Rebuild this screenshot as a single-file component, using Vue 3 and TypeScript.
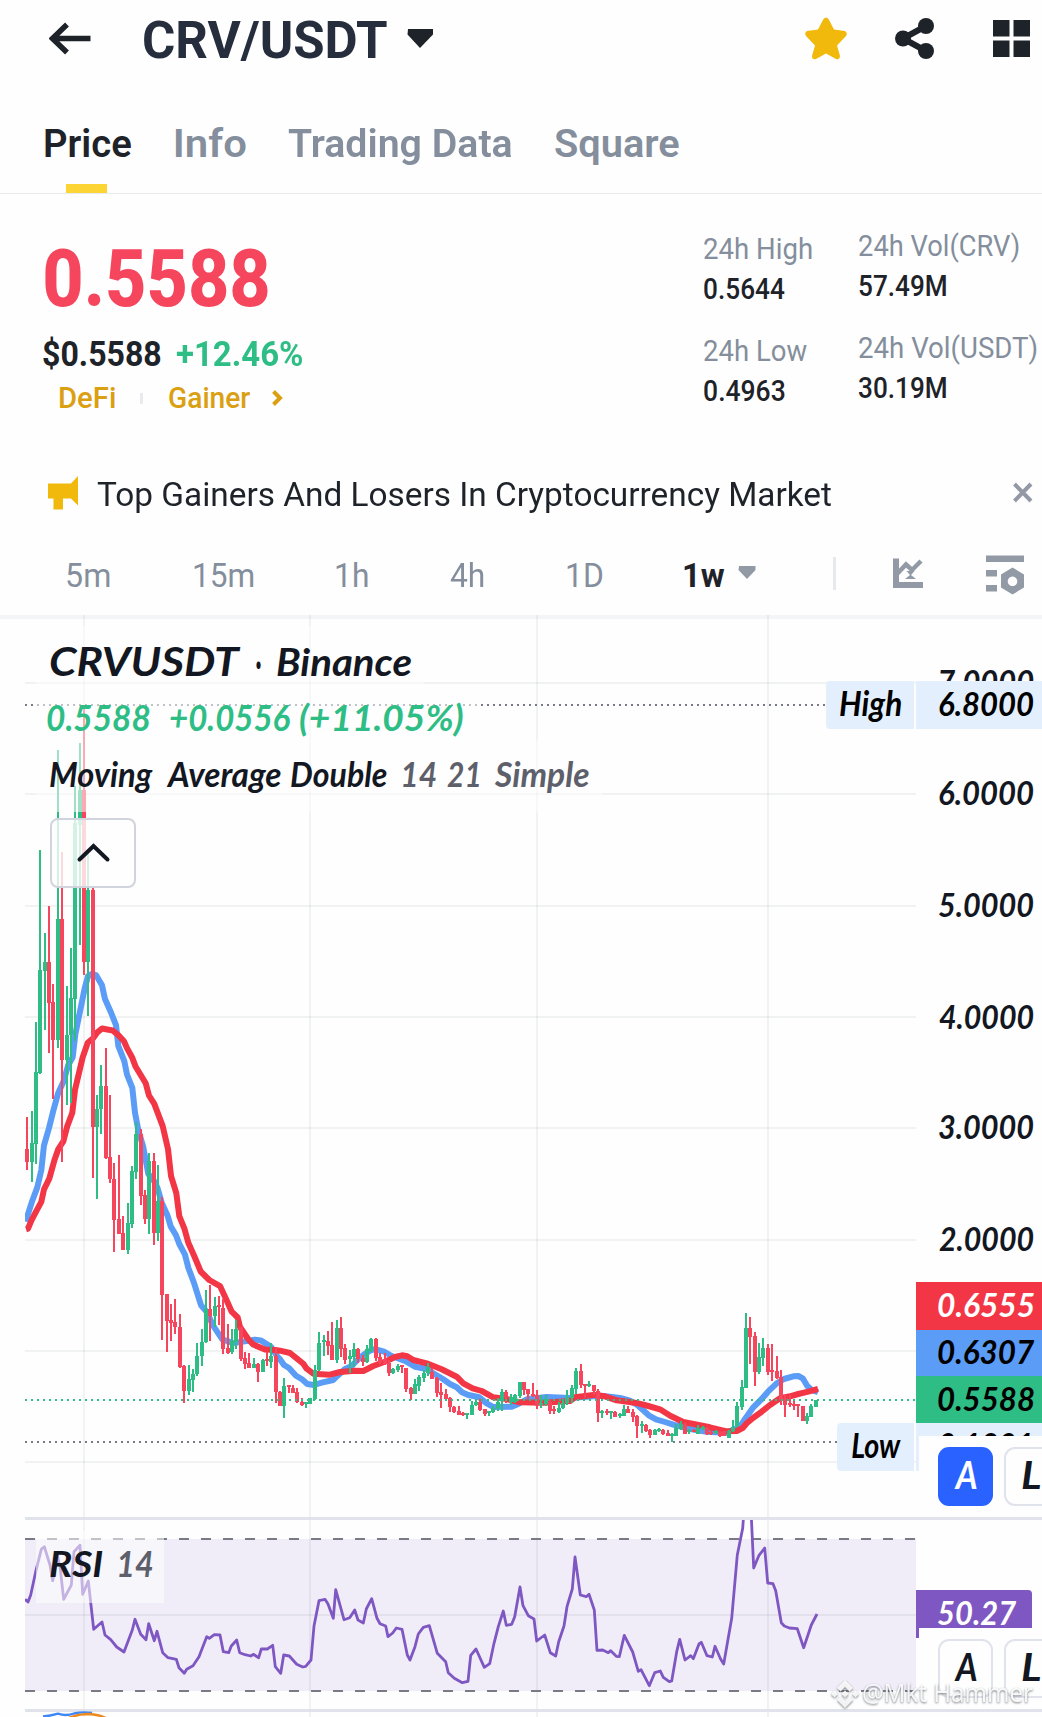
<script setup lang="ts">
type Fitted = { scale: number; shift: number }
type Label = { t: string; x: number; y: number; w: number; size: number; fill: string; weight?: number }
type Candle = { x: number; high: number; low: number; top: number; bottom: number; up: boolean }

const UI = 'Roboto, "Noto Sans", sans-serif'
const HAND = 'Lato, "Open Sans", sans-serif'
const ctx = document.createElement('canvas').getContext('2d')!

// Stretch factor and offset that make the ink of a string span `width` pixels.
function measure(text: string, width: number, font: string): Fitted {
  ctx.font = font
  const m = ctx.measureText(text)
  const ink = m.actualBoundingBoxLeft + m.actualBoundingBoxRight
  const scale = width / ink
  return { scale, shift: m.actualBoundingBoxLeft * scale }
}

function fit(text: string, width: number, size: number, weight: number) {
  const { scale, shift } = measure(text, width, `${weight} ${size}px ${UI}`)
  return {
    width: `${width}px`,
    fontSize: `${size}px`,
    fontWeight: weight,
    transform: `translateX(${shift}px) scaleX(${scale})`,
  }
}

function place(l: Label) {
  const { scale, shift } = measure(l.t, l.w, `italic ${l.weight ?? 700} ${l.size}px ${HAND}`)
  return `translate(${l.x + shift} ${l.y}) scale(${scale} 1)`
}

const tabs = [
  { t: 'Price', w: 86, ml: 45 },
  { t: 'Info', w: 71, ml: 44 },
  { t: 'Trading Data', w: 224, ml: 42 },
  { t: 'Square', w: 124, ml: 43 },
]

const stats = [
  [
    { t: '24h High', w: 108, v: '0.5644', vw: 81 },
    { t: '24h Low', w: 103, v: '0.4963', vw: 81 },
  ],
  [
    { t: '24h Vol(CRV)', w: 160, v: '57.49M', vw: 87 },
    { t: '24h Vol(USDT)', w: 178, v: '30.19M', vw: 87 },
  ],
]

const intervals = [
  { t: '5m', w: 43, ml: 67 },
  { t: '15m', w: 60, ml: 84 },
  { t: '1h', w: 32, ml: 82 },
  { t: '4h', w: 34, ml: 82 },
  { t: '1D', w: 35, ml: 83 },
  { t: '1w', w: 41, ml: 82 },
]

// x, high, low, body top, body bottom, direction — in thirds of a pixel.
const launch = `81 776 914 860 895 r|96 760 945 845 895 g|108 528 898 659 847 g|120 78 663 392 660 g|135 295 550 371 395 g|147 225 608 371 477 r|159 429 728 476 574 r|174 -183 597 259 574 g|186 84 893 259 627 r|201 435 744 562 627 g|213 335 740 465 562 g|225 -89 577 8 467 g|240 -202 326 -78 13 g|252 -292 404 -78 371 r|264 85 511 183 371 g|279 178 935 183 801 r|291 719 990 754 801 g|303 640 821 696 754 g|318 596 886 696 883 r|330 719 948 881 937 r|342 896 1128 937 1045 r|357 875 1082 1044 1081 r|369 1035 1125 1080 1123 r|384 1001 1133 1053 1123 g|396 904 1065 917 1055 g|408 790 937 821 919 g|423 808 1005 821 982 r|435 967 1055 980 1042 r|447 870 1081 892 1042 g|462 870 1110 892 1078 r|474 902 1099 996 1078 g|486 985 1358 996 1241 r|501 1240 1389 1240 1308 r|513 1265 1361 1307 1314 r|525 1252 1343 1313 1326 r|540 1291 1431 1325 1429 r|552 1425 1523 1427 1492 r|567 1424 1502 1462 1492 g|579 1435 1494 1448 1463 g|591 1367 1452 1401 1448 g|606 1331 1426 1365 1402 g|618 1228 1367 1278 1365 g|630 1215 1361 1278 1296 r|645 1247 1324 1270 1296 g|657 1244 1319 1267 1273 r|669 1252 1396 1275 1382 r|684 1317 1396 1380 1394 r|696 1329 1396 1361 1389 g|708 1307 1382 1331 1363 g|723 1325 1415 1325 1409 r|735 1390 1435 1407 1421 r|747 1393 1432 1419 1432 r|762 1405 1432 1422 1432 g|774 1419 1469 1422 1442 r|789 1409 1442 1411 1442 g|801 1391 1427 1408 1414 r|813 1367 1432 1402 1417 g|828 1379 1523 1402 1496 r|840 1492 1531 1494 1531 r`
const middle = `12 294 413 318 378 g|27 315 340 315 320 r|39 315 340 323 338 r|51 324 369 337 366 r|66 354 377 366 374 r|78 366 384 366 371 g|90 354 372 354 372 g|105 255 360 270 357 g|117 156 272 189 270 g|132 165 228 180 186 g|144 153 225 182 198 r|156 126 240 195 240 r|171 120 249 144 240 g|183 111 231 144 207 r|195 192 252 204 240 r|210 210 279 228 237 g|222 189 261 207 231 g|234 204 249 207 237 r|249 225 258 234 246 r|261 195 249 207 246 g|273 174 216 177 213 g|288 174 243 177 234 r|300 219 252 231 246 r|315 219 254 237 252 r|327 240 288 249 279 r|339 264 282 267 279 g|354 252 276 258 270 g|366 255 279 255 259 r|378 264 336 264 327 r|393 321 360 324 342 r|405 297 342 312 342 g|417 285 333 291 318 g|432 270 306 279 294 g|444 249 288 261 279 g|456 264 297 276 297 r|471 291 351 294 339 r|483 309 384 336 346 r|498 327 357 342 357 r|510 351 396 354 381 r|522 378 399 381 396 r|537 378 405 393 405 r|549 396 408 399 405 r|561 399 417 399 405 g|576 363 405 375 405 g|588 357 378 366 375 g|600 357 393 366 390 r|615 387 408 387 402 r|627 393 408 393 399 g|639 378 399 384 396 g|654 354 393 366 384 g|666 327 393 336 363 g|678 330 369 336 354 r|693 342 375 352 366 g|705 342 369 345 366 g|720 306 354 306 347 g|732 306 345 306 330 r|744 327 357 327 342 r|759 309 351 342 348 r|771 330 387 345 378 r|783 345 384 369 375 g|798 345 378 357 372 g|810 357 402 366 393 r|822 378 402 387 393 r|837 366 399 384 396 g|849 357 387 369 384 g|861 330 375 351 369 g|876 315 369 324 354 g|888 264 342 273 327 g|903 252 324 273 315 r|915 312 354 312 318 r|927 303 321 312 318 g|942 315 345 315 333 r|954 327 426 333 399 r`
const recent = `66 390 414 393 399 g|81 387 405 393 399 r|93 393 417 393 399 g|105 393 411 396 411 r|120 399 414 402 408 g|132 375 408 387 408 g|144 378 399 387 399 r|159 387 426 396 411 r|171 405 474 408 438 r|186 423 459 432 438 g|198 432 456 435 453 r|210 447 474 450 465 r|225 447 465 450 465 g|237 444 456 447 453 g|249 447 465 450 462 r|264 450 468 459 468 r|276 459 486 462 468 g|288 432 468 444 468 g|303 423 450 432 447 g|315 429 462 435 462 r|327 447 462 450 456 g|342 447 456 450 456 r|354 435 462 444 462 g|369 438 450 441 447 g|381 441 465 444 462 r|393 453 465 456 462 r|408 450 462 453 459 g|420 453 471 456 468 r|432 453 468 453 468 r|447 450 474 453 474 g|459 420 456 441 453 g|471 366 441 378 438 g|486 300 390 321 381 g|498 99 324 144 324 g|510 111 252 144 171 r|525 156 318 168 276 r|537 189 282 231 276 g|549 174 258 204 234 g|564 192 285 204 276 r|576 192 303 270 276 r|591 228 297 273 294 r|603 270 375 291 360 r|615 345 411 357 375 r|630 345 381 369 375 r|642 357 390 372 378 r|654 372 411 372 378 r|669 378 423 378 423 r|681 399 432 408 423 g|693 372 411 378 411 g|708 360 381 360 381 g`

const TALL = 2.6133

function candles(src: string, x0: number, y0: number, ky: number): Candle[] {
  return src.split('|').map((row) => {
    const p = row.split(' ')
    const y = (i: number) => Math.round(y0 + Number(p[i]) / ky)
    return { x: Math.round(x0 + Number(p[0]) / 3), high: y(1), low: y(2), top: y(3), bottom: y(4), up: p[5] === 'g' }
  })
}

const bars = [
  ...candles(launch, 0, 820, TALL),
  ...candles(middle, 280, 1280, 3),
  ...candles(recent, 580, 1280, 3),
]

function points(src: string, x0: number, y0: number, ky: number) {
  return src
    .split(' ')
    .map((pair) => {
      const [x, y] = pair.split(',').map(Number)
      return `${(x0 + x / 3).toFixed(1)},${(y0 + y / ky).toFixed(1)}`
    })
    .join(' ')
}

const fast = [
  points('78,1050 84,1030 97,995 112,960 124,915 132,850 147,805 160,760 174,715 190,685 205,640 218,620 226,560 240,500 254,440 264,408 276,402 288,405 306,432 315,468 333,503 348,536 355,590 373,630 381,665 397,700 405,765 415,810 430,855 445,925 460,940 472,960 485,1000 503,1035 512,1062 528,1085 538,1108 555,1136 565,1170 583,1212 603,1268 620,1285 640,1322 667,1357 700,1367 745,1361 765,1358 782,1360 812,1376 830,1400', 0, 820, TALL),
  points('0,238 12,255 27,264 48,287 66,298 82,312 102,315 125,308 160,300 172,288 195,267 215,258 232,240 250,225 268,213 285,207 312,215 335,228 375,243 405,260 440,267 460,280 490,298 510,312 530,322 546,337 565,345 598,352 620,370 640,381 695,380 715,372 740,358 800,351 870,354 940,349', 280, 1280, 3),
  points('60,347 90,350 120,354 150,362 172,375 190,391 206,406 228,418 255,426 280,434 330,447 380,455 440,458 480,440 495,417 520,382 545,357 564,335 590,310 612,297 640,289 655,288 668,295 682,318 695,330 714,337', 580, 1280, 3),
].join(' ')

const slow = [
  points('78,1070 84,1068 95,1045 110,1020 124,998 132,965 148,937 163,890 175,860 190,840 202,800 217,765 225,705 248,620 263,582 280,570 292,555 306,545 338,550 355,562 372,578 381,596 396,620 407,645 437,688 447,720 463,742 488,800 504,860 513,930 529,975 538,1035 553,1067 565,1105 582,1138 602,1180 628,1202 660,1218 677,1250 695,1285 713,1300 720,1325 745,1357 760,1371 795,1384 826,1385', 0, 820, TALL),
  points('0,212 30,219 50,235 70,251 80,266 100,281 150,284 180,276 225,272 250,273 280,258 320,243 345,231 366,226 382,229 400,240 440,250 485,268 530,290 550,310 578,325 605,333 640,352 680,357 720,367 790,368 870,363 885,352 940,345', 280, 1280, 3),
  points('45,345 75,349 110,361 175,370 205,378 240,388 272,408 310,426 390,442 440,454 470,453 488,444 500,430 520,413 545,395 570,375 600,355 630,349 655,342 685,335 714,327', 580, 1280, 3),
].join(' ')

const rsi = [
  points('75,298 84,306 92,285 107,215 124,148 133,140 150,195 158,242 172,165 180,200 191,298 214,255 222,155 240,136 248,283 265,243 281,388 306,366 315,405 332,419 350,441 372,456 397,390 405,358 422,403 438,419 446,371 463,422 471,394 488,458 504,473 529,478 537,503 553,520 560,508 579,497 597,470 620,410 628,415 643,404 660,405 670,455 686,458 694,438 710,420 719,458 735,464 752,468 760,463 776,473 784,447 802,447 818,436 826,500 842,520 851,465 868,468 890,493 908,501 917,499 933,480 942,378 957,302 975,298 984,312 1000,355 1007,269 1032,359 1049,353 1064,330 1074,360 1090,369 1099,327 1115,296 1131,355 1140,371 1157,378 1164,410 1178,399 1189,384 1206,388 1222,465', 0, 1500, 3),
  points('0,480 15,440 25,402 40,382 58,377 82,460 107,485 115,518 133,535 157,548 174,544 182,466 198,447 223,502 239,491 252,430 265,380 280,333 289,376 305,373 314,350 330,261 339,317 355,347 372,357 380,423 404,405 421,458 437,468 446,425 462,378 471,320 487,267 495,171 511,285 529,290 537,283 553,330 561,451 578,450 595,458 602,452 619,469 628,470 643,406 668,456 685,514 693,509 718,557 734,518 751,513 760,532 778,545 785,543 800,455 809,418 825,480 842,467 850,476 867,432 874,427 891,467 907,471 915,439 932,478 941,492 965,355 982,165 998,85 1002,30 1023,30 1031,204 1047,166 1064,144 1073,249 1089,251 1097,272 1114,368 1123,378 1138,384 1162,386 1181,443 1204,375 1221,342', 410, 1500, 3),
].join(' ')

const vGrid = [84, 310, 537, 768]
const hGrid = [683, 794, 906, 1017, 1128, 1240, 1351, 1462]

const INK = '#131722'
const scaleLabels: Label[] = [
  { t: '7.0000', x: 939, y: 694, w: 95, size: 33, fill: INK },
  { t: '6.0000', x: 939, y: 805, w: 95, size: 33, fill: INK },
  { t: '5.0000', x: 939, y: 917, w: 95, size: 33, fill: INK },
  { t: '4.0000', x: 939, y: 1029, w: 95, size: 33, fill: INK },
  { t: '3.0000', x: 939, y: 1139, w: 95, size: 33, fill: INK },
  { t: '2.0000', x: 939, y: 1251, w: 95, size: 33, fill: INK },
]
const lowLabel: Label = { t: '0.1801', x: 939, y: 1457, w: 92, size: 33, fill: '#000' }

const tagLabels: Label[] = [
  { t: 'High', x: 840, y: 716, w: 61, size: 34, fill: '#000' },
  { t: '6.8000', x: 939, y: 716, w: 95, size: 33, fill: '#000' },
  { t: '0.6555', x: 938, y: 1317, w: 96, size: 33, fill: '#fff' },
  { t: '0.6307', x: 938, y: 1364, w: 96, size: 33, fill: '#000' },
  { t: '0.5588', x: 938, y: 1411, w: 96, size: 33, fill: '#000' },
  { t: 'Low', x: 852, y: 1458, w: 49, size: 34, fill: '#000' },
  { t: '50.27', x: 938, y: 1625, w: 78, size: 33, fill: '#fff' },
]

const GREEN = '#2ebd85'
const MUTED = '#5d606b'
const legend: Label[] = [
  { t: 'CRVUSDT', x: 50, y: 676, w: 191, size: 41, fill: INK },
  { t: '·', x: 256, y: 677, w: 5, size: 40, fill: INK },
  { t: 'Binance', x: 277, y: 676, w: 134, size: 39, fill: INK },
  { t: '0.5588', x: 47, y: 731, w: 103, size: 36, fill: GREEN },
  { t: '+0.0556', x: 170, y: 731, w: 120, size: 36, fill: GREEN },
  { t: '(+11.05%)', x: 300, y: 731, w: 163, size: 36, fill: GREEN },
  { t: 'Moving', x: 50, y: 787, w: 103, size: 34, fill: INK },
  { t: 'Average', x: 166, y: 787, w: 115, size: 34, fill: INK },
  { t: 'Double', x: 291, y: 787, w: 96, size: 34, fill: INK },
  { t: '14', x: 403, y: 787, w: 33, size: 35, fill: MUTED },
  { t: '21', x: 447, y: 787, w: 32, size: 35, fill: MUTED },
  { t: 'Simple', x: 494, y: 787, w: 95, size: 34, fill: MUTED },
  { t: 'RSI', x: 50, y: 1577, w: 53, size: 36, fill: INK },
  { t: '14', x: 119, y: 1577, w: 34, size: 36, fill: MUTED },
]

const modeLabels: Label[] = [
  { t: 'A', x: 954, y: 1489, w: 23, size: 38, fill: '#fff' },
  { t: 'L', x: 1022, y: 1489, w: 18, size: 38, fill: INK },
  { t: 'A', x: 954, y: 1681, w: 23, size: 38, fill: INK },
  { t: 'L', x: 1022, y: 1681, w: 18, size: 38, fill: INK },
]
</script>

<template>
  <main class="screen">
    <header class="top">
      <svg class="back" width="42" height="81" viewBox="49 0 42 81"><path d="M67 24.5 52.5 38.5 67 52.5M53 38.5H90.5" /></svg>
      <h1 class="txt" :style="fit('CRV/USDT', 243, 51, 700)">CRV/USDT</h1>
      <svg class="caret" width="26" height="81" viewBox="407 0 26 81"><path d="M408 29H433V34.5L420 48 407.500 34.500Z" /></svg>
      <svg class="star" width="42" height="81" viewBox="805 0 42 81">
        <path d="M823.500 19Q826 16 828.500 19L834 29.500 845 31Q848 33 846 36L837 45.500 840 56Q839.500 60 836 59L826 53.500 816 59Q812 60 812 56L815 45.500 806 36Q804 33 807 31L818 29.500Z" />
      </svg>
      <svg class="share" width="40" height="81" viewBox="895 0 40 81">
        <path d="M903 38.500 926 26M903 38.500 926 51" />
        <circle cx="903" cy="38.500" r="8" /><circle cx="926" cy="26" r="8" /><circle cx="926" cy="51" r="8" />
      </svg>
      <svg class="apps" width="38" height="81" viewBox="993 0 38 81">
        <path d="M993 20h16.500v16.500H993zM1013.500 20h16.500v16.500h-16.500zM993 40.500h16.500V57H993zM1013.500 40.500h16.500V57h-16.500z" />
      </svg>
    </header>

    <nav class="tabs">
      <div v-for="(tab, i) in tabs" :key="tab.t" class="tab" :class="{ active: i === 0 }" :style="{ marginLeft: tab.ml + 'px' }">
        <span class="txt" :style="fit(tab.t, tab.w, 38.5, 600)">{{ tab.t }}</span>
      </div>
    </nav>

    <section class="ticker">
      <div class="quote">
        <div class="price txt" :style="fit('0.5588', 223, 80, 800)">0.5588</div>
        <div class="change">
          <span class="txt" :style="fit('$0.5588', 118, 34.5, 700)">$0.5588</span>
          <span class="txt gain" :style="fit('+12.46%', 126, 34.5, 700)">+12.46%</span>
        </div>
        <div class="tags">
          <span class="txt" :style="fit('DeFi', 55, 29, 500)">DeFi</span>
          <i class="bar"></i>
          <span class="txt" :style="fit('Gainer', 81, 29, 500)">Gainer</span>
          <svg width="11" height="16" viewBox="0 0 11 16"><path d="M1.500 1.500 8 8 1.500 14.500" /></svg>
        </div>
      </div>
      <div v-for="(col, c) in stats" :key="c" class="stats" :class="{ wide: c === 1 }">
        <div v-for="s in col" :key="s.t" class="stat">
          <span class="txt label" :style="fit(s.t, s.w, 29.5, 400)">{{ s.t }}</span>
          <span class="txt" :style="fit(s.v, s.vw, 29.5, 500)">{{ s.v }}</span>
        </div>
      </div>
    </section>

    <section class="notice">
      <svg class="horn" width="31" height="69" viewBox="48 460 31 69"><path d="M48 483.500H71L78 476V505.500L71 498.500H63V509.500H53.500V498.500H48Z" /></svg>
      <span class="txt" :style="fit('Top Gainers And Losers In Cryptocurrency Market', 734, 33.5, 450)">Top Gainers And Losers In Cryptocurrency Market</span>
      <svg class="close" width="20" height="69" viewBox="1013 460 20 69"><path d="M1014.500 484 1031 501M1031 484 1014.500 501" /></svg>
    </section>

    <section class="intervals">
      <div v-for="(it, i) in intervals" :key="it.t" class="interval" :class="{ on: i === 5 }" :style="{ marginLeft: it.ml + 'px' }">
        <span class="txt" :style="fit(it.t, it.w, 33.5, i === 5 ? 700 : 450)">{{ it.t }}</span>
      </div>
      <svg class="tools" width="300" height="79" viewBox="738 536 300 79">
        <path d="M739 566H755.500V570L747 579 738.500 570Z" />
        <path class="rule" d="M833 557h3v33h-3z" />
        <path d="M893 558.500h6V582h24v6H893z" />
        <path class="line" d="M897 574 906 564.500 912 570 921 561" />
        <path d="M906.500 571H914.500L911 575 916 579H905L910 575Z" />
        <path d="M986 555.500h38v6.500h-38zM986 570h11v6.500h-11zM986 585h11v6.500h-11z" />
        <path fill-rule="evenodd" d="M1012.500 567.500 1024 574.500V587.500L1012.500 594.500 1001 587.500V574.500ZM1012.500 576.500a4.800 4.800 0 1 0 .01 0Z" />
      </svg>
    </section>

    <svg class="chart" width="1042" height="1102" viewBox="0 615 1042 1102">
      <defs>
        <clipPath id="pane"><rect x="25" y="615" width="891" height="902" /></clipPath>
        <clipPath id="rsiPane"><rect x="25" y="1520" width="891" height="189" /></clipPath>
      </defs>
      <rect class="edge" x="0" y="615" width="1042" height="4" />

      <rect class="band" x="25" y="1539" width="891" height="152" />
      <g class="grid">
        <rect v-for="x in vGrid" :key="'v' + x" :x="x - 1" y="615" width="2" height="1102" />
        <rect v-for="y in hGrid" :key="'h' + y" x="25" :y="y - 1" width="891" height="2" />
        <rect x="25" y="1614" width="891" height="2" />
      </g>

      <path class="dots" d="M25 705H826M25 1442H837" />

      <g clip-path="url(#pane)">
        <polyline class="ma fast" :points="fast" />
        <polyline class="ma slow" :points="slow" />
        <g v-for="(b, i) in bars" :key="i" :class="b.up ? 'up' : 'down'">
          <rect :x="b.x - 1" :y="b.high" width="2" :height="b.low - b.high" />
          <rect :x="b.x - 2" :y="b.top" width="4" :height="Math.max(2, b.bottom - b.top)" />
        </g>
      </g>
      <path class="dots last" d="M25 1400H916" />

      <path class="dash" d="M25 1539H916M25 1691H916" />
      <polyline class="rsi" clip-path="url(#rsiPane)" :points="rsi" />
      <path class="divider" d="M25 1517H1042V1520H25ZM25 1709H1042V1712H25Z" />
      <path class="macd" d="M43 1716.500Q50 1716 58 1713.700 66 1716.500 74 1713.500 83 1711.500 92 1713" />
      <path class="signal" d="M68 1718Q77 1714.500 87 1714 97 1714 106 1718" />

      <g class="veil">
        <rect x="36" y="626" width="388" height="60" />
        <rect x="36" y="686" width="444" height="54" />
        <rect x="36" y="740" width="566" height="72" />
        <rect x="36" y="1531" width="128" height="72" />
      </g>
      <rect class="toggle" x="51" y="819" width="84" height="68" rx="7" />
      <path class="chevron" d="M79.500 859.500 93.500 846 107.500 859.500" />

      <g class="hand">
        <text v-for="(l, i) in scaleLabels" :key="'s' + i" :transform="place(l)" :font-size="l.size" :fill="l.fill">{{ l.t }}</text>
      </g>

      <path class="pale" d="M830 681H914V729H830Q826 729 826 725V685Q826 681 830 681ZM916 681H1042V729H916Z" />
      <path class="pale" d="M841 1423H914V1471H841Q837 1471 837 1467V1427Q837 1423 841 1423ZM916 1423H1042V1471H916Z" />
      <g class="hand">
        <text :transform="place(lowLabel)" :font-size="lowLabel.size" :fill="lowLabel.fill">{{ lowLabel.t }}</text>
      </g>
      <rect x="916" y="1282" width="126" height="48" fill="#f23645" />
      <rect x="916" y="1330" width="126" height="46" fill="#5b9cf6" />
      <rect x="916" y="1376" width="126" height="47" fill="#2ebd85" />
      <path fill="#7e57c2" d="M916 1590H1028Q1032 1590 1032 1594V1638H916Z" />
      <path fill="#fefefe" d="M919 1436H1042V1517H919ZM919 1628H1042V1709H919Z" />

      <rect x="938" y="1447" width="55" height="59" rx="11" fill="#2962ff" />
      <rect class="mode" x="1005" y="1448" width="55" height="57" rx="10" />
      <rect class="mode" x="939" y="1640" width="53" height="57" rx="10" />
      <rect class="mode" x="1005" y="1640" width="55" height="57" rx="10" />

      <g class="hand">
        <text v-for="(l, i) in [...tagLabels, ...legend, ...modeLabels]" :key="'t' + i" :transform="place(l)" :font-size="l.size" :fill="l.fill">{{ l.t }}</text>
      </g>

      <g class="mark">
        <path d="M837 1688 845 1680 853 1688 849.500 1691.500 845 1687 840.500 1691.500ZM831 1694 834.500 1690.500 838 1694 834.500 1697.500ZM852 1694 855.500 1690.500 859 1694 855.500 1697.500ZM841.500 1694 845 1690.500 848.500 1694 845 1697.500ZM837 1700 840.500 1696.500 845 1701 849.500 1696.500 853 1700 845 1708Z" />
        <text x="862" y="1702" textLength="171" lengthAdjust="spacingAndGlyphs">@Mkt Hammer</text>
      </g>
    </svg>
  </main>
</template>

<style>
body {
  margin: 0;
  background: #fefefe;
}
</style>

<style scoped>
.screen {
  width: 1042px;
  height: 1717px;
  overflow: hidden;
  background: #fefefe;
  color: #1e2329;
  font-family: Roboto, "Noto Sans", sans-serif;
}
svg {
  display: block;
  flex: none;
}
.txt {
  display: block;
  flex: none;
  margin: 0;
  white-space: nowrap;
  transform-origin: 0 50%;
}
.top {
  display: flex;
  height: 81px;
  padding-left: 49px;
}
.top h1 {
  margin-left: 53px;
  line-height: 81px;
  color: #262d3d;
}
.back path {
  fill: none;
  stroke: #1e2329;
  stroke-width: 5.5;
}
.caret {
  margin-left: 20px;
  fill: #1e2329;
}
.star {
  margin-left: 372px;
  fill: #f0b90b;
}
.share {
  margin-left: 48px;
  fill: #1e2329;
}
.share path {
  stroke: #1e2329;
  stroke-width: 6;
}
.apps {
  margin-left: 58px;
  fill: #1e2329;
}
.tabs {
  display: flex;
  height: 112px;
  border-bottom: 1px solid #e9eaec;
}
.tab {
  position: relative;
  padding-top: 33px;
  height: 79px;
  line-height: 60px;
  color: #848e9c;
}
.tab.active {
  color: #1e2329;
}
.tab.active::after {
  content: "";
  position: absolute;
  left: 21px;
  bottom: 0;
  width: 41px;
  height: 9px;
  background: #fcd535;
}
.ticker {
  display: flex;
  height: 266px;
}
.quote {
  width: 660px;
  padding: 44px 0 0 45px;
  box-sizing: border-box;
  margin-right: 44px;
}
.price {
  line-height: 82px;
  color: #f6465d;
}
.change {
  display: flex;
  gap: 15px;
  margin: 12px 0 0 -2px;
  line-height: 44px;
}
.gain {
  color: #2ebd85;
}
.tags {
  display: flex;
  align-items: center;
  padding-left: 15px;
  line-height: 44px;
  color: #dba012;
}
.bar {
  width: 3px;
  height: 11px;
  margin: 0 26px 0 25px;
  background: #e9eaee;
}
.tags svg {
  margin-left: 22px;
}
.tags path {
  fill: none;
  stroke: #dba012;
  stroke-width: 4;
}
.stats {
  display: flex;
  flex-direction: column;
  gap: 22px;
  width: 155px;
  padding-top: 35px;
  line-height: 40px;
}
.stats.wide {
  padding-top: 32px;
}
.label {
  color: #848e9c;
}
.notice {
  display: flex;
  height: 69px;
  padding-left: 48px;
  line-height: 69px;
}
.horn {
  margin-right: 18px;
  fill: #f0b90b;
}
.close {
  margin-left: 182px;
}
.close path {
  fill: none;
  stroke: #9299a5;
  stroke-width: 4;
}
.intervals {
  display: flex;
  height: 79px;
  padding-top: 7px;
  line-height: 79px;
}
.interval {
  color: #848e9c;
}
.interval.on {
  color: #1e2329;
}
.tools {
  margin-left: 13px;
  fill: #929aa6;
}
.tools .rule {
  fill: #e8e9ed;
}
.tools .line {
  fill: none;
  stroke: #929aa6;
  stroke-width: 4.5;
}
.edge {
  fill: #f4f5f6;
}
.band {
  fill: #f0edf8;
}
.grid rect {
  fill: #2a2e39;
  fill-opacity: 0.06;
}
.dots {
  fill: none;
  stroke: #787b86;
  stroke-width: 2;
  stroke-dasharray: 2 4;
}
.dots.last {
  stroke: #2ebd85;
}
.ma {
  fill: none;
  stroke-width: 6;
  stroke-linejoin: round;
}
.fast {
  stroke: #5b9cf6;
}
.slow {
  stroke: #f23645;
}
.up {
  fill: #2ebd85;
}
.down {
  fill: #f6465d;
}
.dash {
  fill: none;
  stroke: #787b86;
  stroke-width: 2;
  stroke-dasharray: 10 12;
}
.rsi {
  fill: none;
  stroke: #7e57c2;
  stroke-width: 2.8;
  stroke-linejoin: round;
}
.divider {
  fill: #e0e3eb;
}
.macd,
.signal {
  fill: none;
  stroke: #3f86f7;
  stroke-width: 2.4;
}
.signal {
  stroke: #ee8a1d;
}
.veil rect {
  fill: #fefefe;
  fill-opacity: 0.55;
}
.toggle {
  fill: #fefefe;
  fill-opacity: 0.8;
  stroke: #d1d4dc;
  stroke-width: 2;
}
.chevron {
  fill: none;
  stroke: #131722;
  stroke-width: 4;
  stroke-linecap: round;
}
.pale {
  fill: #e3effd;
}
.mode {
  fill: #fefefe;
  stroke: #e0e3eb;
  stroke-width: 2;
}
.hand text {
  font-family: Lato, "Open Sans", sans-serif;
  font-style: italic;
  font-weight: 700;
}
.mark {
  fill: #fff;
  fill-opacity: 0.9;
  filter: drop-shadow(0.5px 1px 0.8px rgba(60, 64, 75, 0.75));
}
.mark text {
  font-family: "Noto Sans", "Open Sans", sans-serif;
  font-size: 25px;
}
</style>
